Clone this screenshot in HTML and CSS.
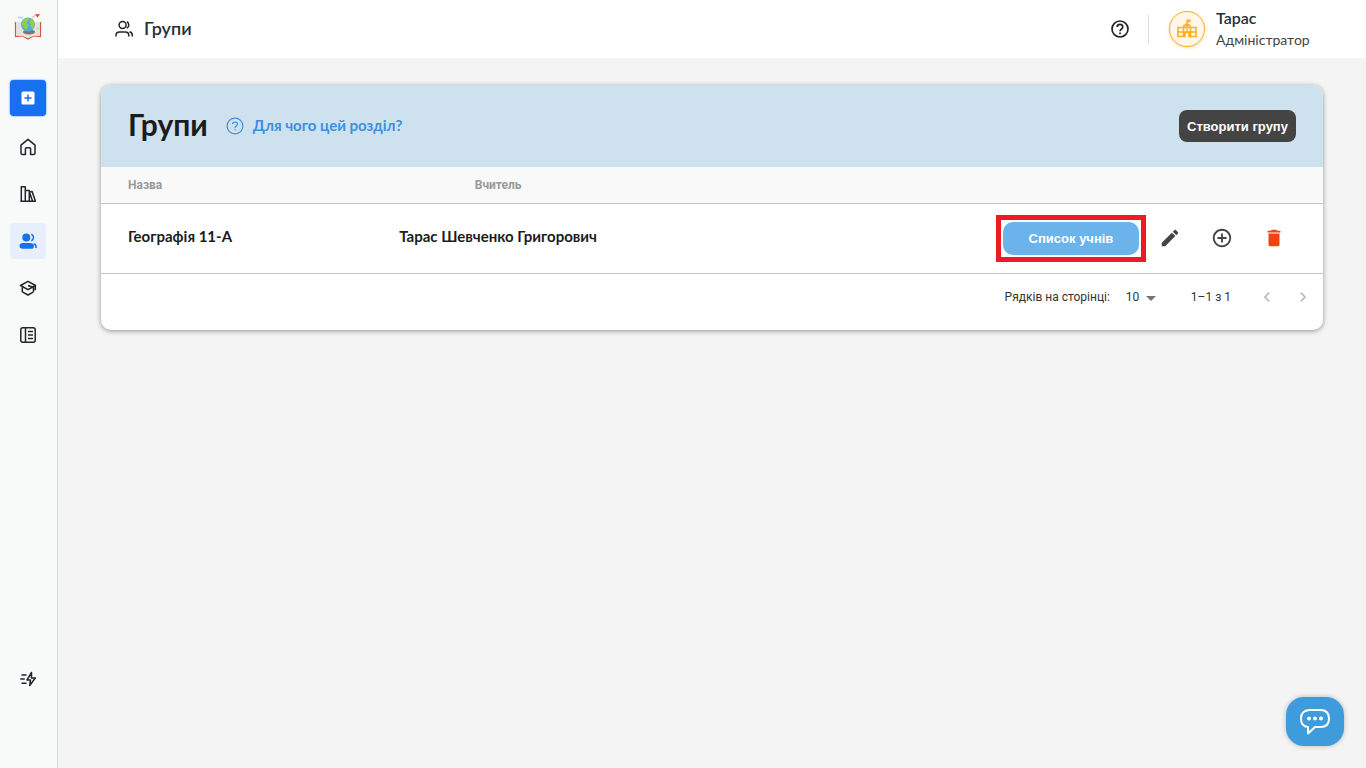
FILE: index.html
```
<!DOCTYPE html>
<html lang="uk">
<head>
    <meta charset="utf-8">
    <meta name="viewport" content="width=device-width, initial-scale=1">
    <title>Групи</title>
    <link rel="stylesheet" href="styles.css">
</head>
<body>
    <aside class="sidebar">
        <a class="logo" href="#" aria-label="На головну">
            <svg width="28" height="28" viewBox="0 0 28 28">
                <path d="M1.500 9v14.500l7-.5 5.500 3 5.500-3 7 .5V9" fill="#f3e6e1" stroke="#d5593b" stroke-width="1.200"/>
                <path d="M2.500 9q7-1 11.500 3v13q-5-3-11.500-2.500zM25.500 9q-7-1-11.500 3v13q5-3 11.500-2.500z" fill="#e4e2e0"/>
                <ellipse cx="15" cy="19" rx="6" ry="2.500" fill="#777"/>
                <circle cx="14" cy="11.500" r="7" fill="#55aee0"/>
                <path d="M8 8.500q2-4 7-3.500l-1 3.500-2 1 2.500 2.500-2 5q-5-3-4.500-8.500zM16 7l3-.5 2 4-2 5-3-2.500 1-2-1.500-1.500z" fill="#96cb45"/>
                <path d="M4 4.500h5M22.500 15.500h3" stroke="#a8d4ef" stroke-width="1.500"/>
                <path d="M18 4.500l3-2" stroke="#e5a595" stroke-width="1"/>
                <path d="M20.500 1.500L26 1l-2.500 3.500-1.500-1.700z" fill="#d9482f"/>
            </svg>
        </a>
        <nav class="menu">
            <button class="menu-item add" type="button" aria-label="Додати">
                <svg width="14" height="14" viewBox="0 0 14 14">
                    <rect x="0.5" y="0.5" width="13" height="13" rx="1.5" fill="#fff"/>
                    <path d="M7 3.500v7M3.500 7h7" stroke="#1670f0" stroke-width="1.500"/>
                </svg>
            </button>
            <a class="menu-item" href="#" aria-label="Головна">
                <svg class="line" width="20" height="20" viewBox="0 0 20 20">
                    <path d="M3 8.200L10 2.400l7 5.800V16q0 1.600-1.600 1.600H12.600V12q0-1.200-1.200-1.200H8.600q-1.200 0-1.200 1.200v5.600H4.600Q3 17.600 3 16z"/>
                </svg>
            </a>
            <a class="menu-item" href="#" aria-label="Бібліотека">
                <svg class="line" width="20" height="20" viewBox="0 0 20 20">
                    <path d="M3.300 17V2.800h4V17M7.300 6.500h4V17M11.500 8.200l2.600-.8L17.300 16.800M11.500 8.200l3 8.800M2.300 17.300h15.600"/>
                </svg>
            </a>
            <a class="menu-item active" href="#" aria-label="Групи">
                <svg width="20" height="20" viewBox="0 0 20 20" fill="#1670f0">
                    <circle cx="8.300" cy="6.400" r="4"/>
                    <path d="M5 12h7q4 0 4 3t-3 2.800H5Q1.500 17.800 1.500 15T5 12z"/>
                    <path d="M13.300 3.200q2.200 1 2.200 3.300t-2.200 3.300M15.800 12.600q2.700 1.200 2.300 4.400" fill="none" stroke="#1670f0" stroke-width="1.500"/>
                </svg>
            </a>
            <a class="menu-item" href="#" aria-label="Навчання">
                <svg class="line" width="20" height="20" viewBox="0 0 20 20">
                    <path d="M2.500 7.500L10 3.300l7.500 4.200L10 11.700zM4.300 8.800v5L10 17l5.500-3.200M10 7.500l5.500 2v4.300M17.300 7.800v4.500"/>
                </svg>
            </a>
            <a class="menu-item" href="#" aria-label="Журнал">
                <svg class="line" width="20" height="20" viewBox="0 0 20 20">
                    <rect x="2.800" y="2.800" width="14.400" height="14.400" rx="2"/>
                    <path d="M7.500 2.800v14.400M10 6.600h5M10 10h5M10 13.400h5"/>
                </svg>
            </a>
        </nav>
        <a class="menu-item quick" href="#" aria-label="Швидкі дії">
            <svg class="line" width="20" height="20" viewBox="0 0 20 20">
                <path d="M13.500 3.500L9 11h3.500l-.8 5.500L17.300 9h-3.800zM3.500 6h5M2.300 10h4.500M3.500 14.300h5"/>
            </svg>
        </a>
    </aside>

    <div class="page">
        <header class="topbar">
            <svg class="line" width="20" height="20" viewBox="0 0 20 20">
                <circle cx="8.600" cy="6" r="3.500"/>
                <path d="M2 17.500v-1q0-3.500 3.500-3.500h5.800q3.500 0 3.500 3.500v1M12.800 2.800q2 .8 2 3.200t-2 3.200M15.500 12.800q2.800.8 2.800 3.500v1.200"/>
            </svg>
            <span class="topbar-title">Групи</span>
            <button class="help" type="button" aria-label="Допомога">
                <svg width="20" height="20" viewBox="0 0 20 20" fill="none" stroke="#20242b" stroke-width="1.700">
                    <circle cx="10" cy="10" r="8"/>
                    <path d="M7.200 8q0-2.700 2.800-2.700T12.800 8q0 1.200-1.500 2.200-1.300.9-1.300 2.100M10 13.500v1.700"/>
                </svg>
            </button>
            <div class="user">
                <div class="avatar">
                    <svg width="22" height="22" viewBox="0 0 22 22" fill="none" stroke="#ffad23" stroke-width="1.600">
                        <path d="M2 9.500h18v9h-7V14.500H9v4H2zM2 14h18M7.500 9v9.500M14.500 9v9.500"/>
                        <path d="M6.500 8.500q0-1.500 2-2L11 5l2.500 1.500q2 .5 2 2z" fill="#ffad23" stroke="none"/>
                        <path d="M11 9.500v4.500M11 6V1.500M11 2.200h3v1.500h-3" stroke-width="1.300"/>
                    </svg>
                </div>
                <div class="user-text">
                    <div class="user-name">Тарас</div>
                    <div class="user-role">Адміністратор</div>
                </div>
            </div>
        </header>

        <main class="content">
            <section class="card">
                <div class="card-head">
                    <h1>Групи</h1>
                    <a class="why" href="#">
                        <svg width="18" height="18" viewBox="0 0 18 18" fill="none" stroke="#3d8fe0" stroke-width="1.200">
                            <circle cx="9" cy="9" r="7.900"/>
                            <path d="M6.500 7.300q0-2.300 2.500-2.300t2.500 2.100q0 1-1.300 1.900Q9 9.800 9 10.900M9 12v1.300"/>
                        </svg>
                        <span>Для чого цей розділ?</span>
                    </a>
                    <button class="create" type="button">Створити групу</button>
                </div>

                <table class="groups">
                    <thead>
                        <tr>
                            <th class="col-name">Назва</th>
                            <th class="col-teacher">Вчитель</th>
                            <th></th>
                        </tr>
                    </thead>
                    <tbody>
                        <tr>
                            <td class="col-name"><span>Географія 11-А</span></td>
                            <td class="col-teacher"><span>Тарас Шевченко Григорович</span></td>
                            <td>
                                <div class="actions">
                                    <button class="students" type="button">Список учнів</button>
                                    <button class="icon-btn" type="button" aria-label="Редагувати">
                                        <svg width="22" height="22" viewBox="0 0 24 24" fill="#444">
                                            <path d="M3 17.250V21h3.750L17.810 9.940l-3.750-3.750L3 17.250zM20.710 7.040c.39-.39.39-1.020 0-1.410l-2.340-2.340c-.39-.39-1.020-.39-1.410 0l-1.830 1.830 3.750 3.750 1.830-1.830z"/>
                                        </svg>
                                    </button>
                                    <button class="icon-btn" type="button" aria-label="Додати">
                                        <svg width="22" height="22" viewBox="0 0 24 24" fill="#444">
                                            <path d="M13 7h-2v4H7v2h4v4h2v-4h4v-2h-4V7zm-1-5C6.480 2 2 6.480 2 12s4.480 10 10 10 10-4.480 10-10S17.520 2 12 2zm0 18c-4.410 0-8-3.590-8-8s3.590-8 8-8 8 3.590 8 8-3.590 8-8 8z"/>
                                        </svg>
                                    </button>
                                    <button class="icon-btn" type="button" aria-label="Видалити">
                                        <svg width="22" height="22" viewBox="0 0 24 24" fill="#ee4510">
                                            <path d="M6 19c0 1.100.9 2 2 2h8c1.100 0 2-.9 2-2V7H6v12zM19 4h-3.500l-1-1h-5l-1 1H5v2h14V4z"/>
                                        </svg>
                                    </button>
                                </div>
                            </td>
                        </tr>
                    </tbody>
                </table>

                <div class="pager">
                    <label for="rows">Рядків на сторінці:</label>
                    <div class="select">
                        <select id="rows">
                            <option>10</option>
                            <option>25</option>
                            <option>50</option>
                        </select>
                    </div>
                    <span class="range">1–1 з 1</span>
                    <button class="page-btn" type="button" disabled aria-label="Попередня">
                        <svg width="20" height="20" viewBox="0 0 24 24" fill="#bbb"><path d="M15.410 7.410L14 6l-6 6 6 6 1.410-1.410L10.830 12z"/></svg>
                    </button>
                    <button class="page-btn" type="button" disabled aria-label="Наступна">
                        <svg width="20" height="20" viewBox="0 0 24 24" fill="#bbb"><path d="M10 6L8.590 7.410 13.170 12l-4.580 4.590L10 18l6-6z"/></svg>
                    </button>
                </div>
            </section>
        </main>
    </div>

    <button class="chat" type="button" aria-label="Чат">
        <svg width="32" height="28" viewBox="0 0 32 28" fill="none" stroke="#fff" stroke-width="2" stroke-linejoin="round">
            <path d="M10.500 2h11q8.500 0 8.500 8.500T21.500 19H16l-7 6.500V19Q2 18.500 2 10.500T10.500 2z"/>
            <g fill="#fff" stroke="none">
                <circle cx="10" cy="10.500" r="2"/>
                <circle cx="16" cy="10.500" r="2"/>
                <circle cx="22" cy="10.500" r="2"/>
            </g>
        </svg>
    </button>
</body>
</html>
```
FILE: styles.css
```
* {
    box-sizing: border-box;
}

body {
    display: flex;
    margin: 0;
    min-height: 100vh;
    background: #f4f4f4;
    color: #1c1c1c;
    font-family: Lato, "Noto Sans", sans-serif;
    font-size: 15px;
}

button {
    padding: 0;
    border: 0;
    background: none;
    font-family: "Liberation Sans", sans-serif;
    cursor: pointer;
}

a {
    text-decoration: none;
}

svg {
    display: block;
}

.line {
    fill: none;
    stroke: #20242b;
    stroke-width: 1.5;
    stroke-linejoin: round;
}

/* sidebar */
.sidebar {
    display: flex;
    flex-direction: column;
    align-items: center;
    flex: none;
    width: 58px;
    padding: 13px 1px 71px 0;
    border-right: 1px solid #d5dada;
    background: #f8faf9;
}

.menu {
    display: flex;
    flex-direction: column;
    gap: 11px;
    margin-top: 39px;
}

.menu-item {
    display: flex;
    align-items: center;
    justify-content: center;
    width: 36px;
    height: 36px;
    border-radius: 4px;
}

.add {
    margin-bottom: 2px;
    background: #1670f0;
    box-shadow: 0 0 2px #1670f0;
}

.active {
    background: #e8effc;
}

.quick {
    margin-top: auto;
}

/* top bar */
.page {
    flex: 1;
    min-width: 0;
}

.topbar {
    display: flex;
    align-items: center;
    height: 58px;
    padding: 0 54px 0 56px;
    background: #fff;
}

.topbar-title {
    margin-left: 10px;
    padding-bottom: 2px;
    color: #2b2f36;
    font-size: 18px;
    font-weight: 600;
}

.help {
    margin-left: auto;
    padding-right: 18px;
}

.user {
    display: flex;
    align-items: center;
    gap: 11px;
    height: 29px;
    padding-left: 20px;
    border-left: 1px solid #ddd;
}

.user-text {
    min-width: 96px;
}

.avatar {
    display: flex;
    align-items: center;
    justify-content: center;
    width: 36px;
    height: 36px;
    border: 1px solid #ffad23;
    border-radius: 50%;
    background: #fff8ea;
    box-shadow: 0 1px 3px rgba(255, 173, 35, 0.4);
}

.user-name {
    color: #2b2f36;
    font-size: 16px;
    font-weight: 600;
    line-height: 22px;
}

.user-role {
    color: #444;
    font-size: 14px;
    line-height: 22px;
}

/* card */
.content {
    padding: 27px 43px;
}

.card {
    overflow: hidden;
    border-radius: 10px;
    background: #fff;
    box-shadow: 0 1px 5px rgba(0, 0, 0, 0.4);
}

.card-head {
    display: flex;
    align-items: center;
    height: 82px;
    padding: 0 27px;
    background: #cee1ee;
}

h1 {
    margin: 0;
    padding-bottom: 4px;
    font-size: 30px;
    font-weight: 700;
}

.why {
    display: flex;
    align-items: center;
    gap: 9px;
    margin-left: 18px;
    color: #3d8fe0;
    font-weight: 700;
}

.why span {
    padding-bottom: 2px;
}

.create {
    width: 117px;
    height: 32px;
    margin-left: auto;
    border-radius: 8px;
    background: #444;
    color: #fff;
    font-size: 13px;
    font-weight: 700;
}

/* table */
.groups {
    width: 100%;
    border-collapse: collapse;
    table-layout: fixed;
}

.groups th,
.groups td {
    padding: 0;
    border-bottom: 1px solid #c4c4c4;
}

.groups th {
    height: 36px;
    background: #f9f9f9;
    color: #999;
    font-family: Roboto, sans-serif;
    font-size: 12px;
    font-weight: 700;
}

.groups td {
    height: 70px;
    font-weight: 700;
}

.groups td span {
    display: block;
    padding-bottom: 4px;
}

.groups .col-name {
    width: 22%;
    padding-left: 27px;
    text-align: left;
}

.groups .col-teacher {
    width: 21%;
    text-align: center;
}

.actions {
    display: flex;
    align-items: center;
    justify-content: flex-end;
    gap: 10px;
    padding-right: 28px;
}

.students {
    position: relative;
    width: 136px;
    height: 33px;
    border-radius: 10px;
    background: #6ab3eb;
    color: #fff;
    font-size: 13px;
    font-weight: 700;
}

.students::after {
    content: "";
    position: absolute;
    inset: -7px;
    border: 5px solid #ec1b24;
}

.icon-btn {
    display: flex;
    align-items: center;
    justify-content: center;
    width: 42px;
    height: 42px;
}

/* pagination */
.pager {
    display: flex;
    align-items: center;
    justify-content: flex-end;
    height: 56px;
    padding: 0 10px 10px 0;
    color: #333;
    font-family: Roboto, sans-serif;
    font-size: 12px;
}

.select {
    position: relative;
    margin-left: 16px;
}

.select::after {
    content: "";
    position: absolute;
    top: 6px;
    right: 0;
    border: 5px solid transparent;
    border-top-color: #757575;
    border-bottom: 0;
    pointer-events: none;
}

.select select {
    width: 30px;
    padding: 0;
    border: 0;
    background: none;
    color: #333;
    font: inherit;
    appearance: none;
}

.range {
    margin: 0 26px 0 35px;
}

.page-btn {
    margin-left: 16px;
}

.range + .page-btn {
    margin-left: 0;
}

.chat {
    position: fixed;
    right: 22px;
    bottom: 22px;
    display: flex;
    align-items: center;
    justify-content: center;
    width: 58px;
    height: 49px;
    border-radius: 18px;
    background: #3e9bdc;
    box-shadow: 0 0 5px rgba(0, 0, 0, 0.25);
}
```
